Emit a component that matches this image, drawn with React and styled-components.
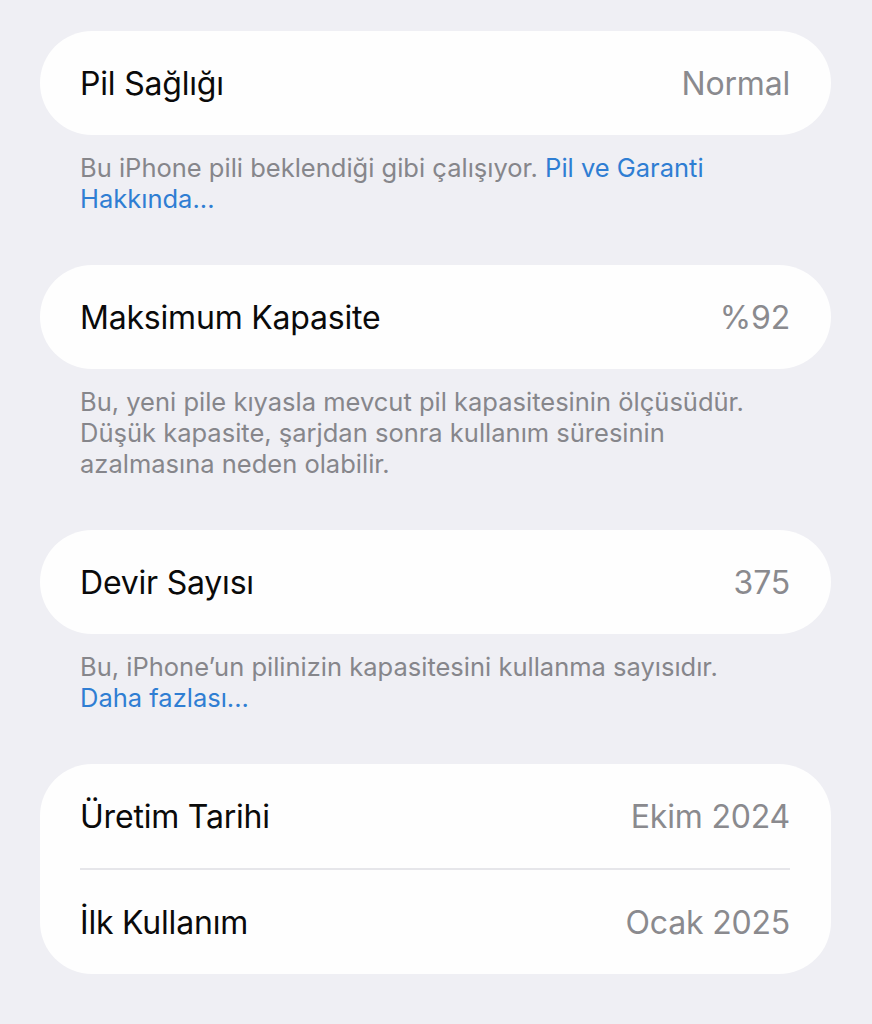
import styled, { createGlobalStyle } from "styled-components";

const GlobalStyle = createGlobalStyle`
  body {
    margin: 0;
    background: #efeff4;
    font-family: Inter, "Noto Sans", "Liberation Sans", sans-serif;
    -webkit-font-smoothing: antialiased;
  }
`;

const sections = [
  {
    rows: [{ label: "Pil Sağlığı", value: "Normal" }],
    note: "Bu iPhone pili beklendiği gibi çalışıyor.",
    link: "Pil ve Garanti Hakkında...",
  },
  {
    rows: [{ label: "Maksimum Kapasite", value: "%92" }],
    note:
      "Bu, yeni pile kıyasla mevcut pil kapasitesinin ölçüsüdür. Düşük kapasite, şarjdan sonra kullanım süresinin azalmasına neden olabilir.",
  },
  {
    rows: [{ label: "Devir Sayısı", value: "375" }],
    note: "Bu, iPhone’un pilinizin kapasitesini kullanma sayısıdır.",
    link: "Daha fazlası...",
    breakBefore: true,
  },
  {
    rows: [
      { label: "Üretim Tarihi", value: "Ekim 2024" },
      { label: "İlk Kullanım", value: "Ocak 2025" },
    ],
  },
];

export default function App() {
  return (
    <>
      <GlobalStyle />
      <Page>
        {sections.map((s, i) => (
          <Section key={i}>
            <Card>
              {s.rows.map((r, j) => (
                <Row key={j} divided={j > 0}>
                  <Label>{r.label}</Label>
                  <Value>{r.value}</Value>
                </Row>
              ))}
            </Card>
            {s.note && (
              <Note>
                {s.note}
                {s.link && (s.breakBefore ? <br /> : " ")}
                {s.link && <NoteLink>{s.link}</NoteLink>}
              </Note>
            )}
          </Section>
        ))}
      </Page>
    </>
  );
}

const Page = styled.div`
  padding: 31px 41px 40px 40px;
  display: flex;
  flex-direction: column;
  gap: 51px;
`;

const Section = styled.section`
  display: flex;
  flex-direction: column;
`;

const Card = styled.div`
  background: #fefefe;
  border-radius: 52px;
  padding: 0 41px 0 40px;
`;

const Row = styled.div`
  height: 104px;
  display: flex;
  align-items: center;
  justify-content: space-between;
  ${props => props.divided && "border-top: 2px solid #e6e6ea;"}
`;

const Label = styled.span`
  font-size: 32px;
  color: #0a0a0a;
  letter-spacing: -0.2px;
`;

const Value = styled.span`
  font-size: 32px;
  color: #8a8a8e;
  letter-spacing: -0.2px;
`;

const Note = styled.p`
  margin: 0;
  padding: 17px 60px 0 40px;
  font-size: 25.5px;
  line-height: 31px;
  color: #86868b;
`;

const NoteLink = styled.span`
  color: #2f7ed3;
`;
